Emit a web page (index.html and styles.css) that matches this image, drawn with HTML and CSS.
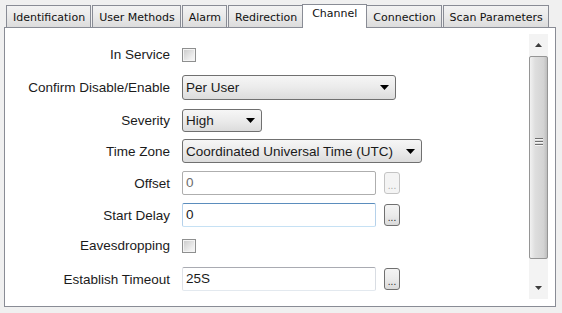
FILE: index.html
```html
<!DOCTYPE html>
<html lang="en">
<head>
  <meta charset="UTF-8" />
  <title>Channel</title>
  <link rel="stylesheet" href="styles.css">
</head>
<body>
  <div class="window">
    <div class="tabs">
      <div class="tab">Identification</div>
      <div class="tab">User Methods</div>
      <div class="tab">Alarm</div>
      <div class="tab">Redirection</div>
      <div class="tab active">Channel</div>
      <div class="tab">Connection</div>
      <div class="tab">Scan Parameters</div>
    </div>
    <div class="panel">
      <div class="form">
        <div class="label">In Service</div>
        <div class="field"><span class="check"></span></div>

        <div class="label">Confirm Disable/Enable</div>
        <div class="field">
          <div class="select confirm"><span>Per User</span><svg width="9" height="5"><polygon points="0,0 9,0 4.5,5" fill="#000"/></svg></div>
        </div>

        <div class="label">Severity</div>
        <div class="field">
          <div class="select severity"><span>High</span><svg width="9" height="5"><polygon points="0,0 9,0 4.5,5" fill="#000"/></svg></div>
        </div>

        <div class="label">Time Zone</div>
        <div class="field">
          <div class="select zone"><span>Coordinated Universal Time (UTC)</span><svg width="9" height="5"><polygon points="0,0 9,0 4.5,5" fill="#000"/></svg></div>
        </div>

        <div class="label">Offset</div>
        <div class="field">
          <div class="input disabled">0</div>
          <div class="dots disabled">...</div>
        </div>

        <div class="label">Start Delay</div>
        <div class="field">
          <div class="input focus">0</div>
          <div class="dots">...</div>
        </div>

        <div class="label">Eavesdropping</div>
        <div class="field"><span class="check"></span></div>

        <div class="label">Establish Timeout</div>
        <div class="field">
          <div class="input">25S</div>
          <div class="dots">...</div>
        </div>
      </div>
      <div class="scrollbar">
        <div class="sb-up"><svg width="7" height="4"><polygon points="0,4 7,4 3.5,0" fill="#3c3c3c"/></svg></div>
        <div class="sb-thumb"><span class="grip"></span></div>
        <div class="sb-down"><svg width="7" height="4"><polygon points="0,0 7,0 3.5,4" fill="#3c3c3c"/></svg></div>
      </div>
    </div>
  </div>
</body>
</html>
```

FILE: styles.css
```css
body {
  margin: 0;
  background: #f0f0f0;
  font-family: "Liberation Sans", Arial, sans-serif;
  font-size: 13.5px;
  color: #1b1b1b;
}
.window {
  width: 562px;
  height: 313px;
  padding: 4px 0 0 4px;
  box-sizing: border-box;
}
.tabs {
  display: flex;
  align-items: flex-end;
  height: 23px;
  padding-left: 2px;
}
.tab {
  height: 20px;
  line-height: 21px;
  padding: 1px 5px 0 6px;
  margin-right: 1px;
  border: 1px solid #898c95;
  border-bottom: none;
  background: linear-gradient(#f3f3f3, #e9e9e9 50%, #dcdcdc);
  font-family: "DejaVu Sans", Verdana, sans-serif;
  font-size: 11px;
  color: #111;
  white-space: nowrap;
}
.tab.active {
  position: relative;
  z-index: 1;
  height: 23px;
  line-height: 17px;
  padding: 0 9px;
  margin: 0 -1px -1px -2px;
  background: #fff;
}
.panel {
  width: 552px;
  height: 280px;
  box-sizing: border-box;
  display: flex;
  padding: 6px 7px 7px 0;
  border: 1px solid #898c95;
  background: #fff;
}
.form {
  flex: 1;
  display: grid;
  grid-template-columns: 165px 1fr;
  grid-template-rows: 31px 35px 30px 32px 32px 32px 29px 38px;
  column-gap: 12px;
  align-items: center;
  align-content: start;
  padding-top: 5px;
}
.label {
  text-align: right;
  white-space: nowrap;
}
.field {
  display: flex;
  align-items: center;
}
.check {
  width: 14px;
  height: 14px;
  box-sizing: border-box;
  border: 1px solid #8e8f8f;
  box-shadow: inset 0 0 0 1px #f4f4f4;
  background: linear-gradient(135deg, #c9c9c9, #eeeeee 70%, #f8f8f8);
}
.select {
  display: flex;
  align-items: center;
  justify-content: space-between;
  box-sizing: border-box;
  padding: 0 6px 0 3px;
  border: 1px solid #707070;
  border-radius: 3px;
  background: linear-gradient(#f6f6f6, #ebebeb 50%, #dcdcdc);
  color: #1a1a1a;
}
.select.confirm {
  width: 214px;
  height: 25px;
}
.select.severity {
  width: 80px;
  height: 23px;
}
.select.zone {
  width: 240px;
  height: 24px;
}
.input {
  width: 194px;
  height: 24px;
  box-sizing: border-box;
  padding-left: 3px;
  line-height: 21px;
  border: 1px solid;
  border-color: #a9abb2 #d9dde3 #e3e9ef #dfe2e8;
  border-radius: 2px;
  background: #fff;
}
.input.disabled {
  border-color: #aeaeae;
  color: #6d6d6d;
}
.input.focus {
  border-color: #5b8dbd #b5d1ea #c6e1f4 #b5d1ea;
}
.dots {
  width: 16px;
  height: 22px;
  box-sizing: border-box;
  margin-left: 8px;
  border: 1px solid #707070;
  border-radius: 3px;
  background: linear-gradient(#f4f4f4, #ebebeb 50%, #dadada);
  font-size: 10px;
  line-height: 26px;
  text-align: center;
  color: #2a2a2a;
  overflow: hidden;
}
.dots.disabled {
  border-color: #c4c4c4;
  background: #f4f4f4;
  color: #a8a8a8;
}
.scrollbar {
  width: 19px;
  display: flex;
  flex-direction: column;
  background: #efefef;
}
.sb-up {
  height: 22px;
  display: flex;
  justify-content: center;
  padding-top: 9px;
  box-sizing: border-box;
  background: #f3f3f3;
}
.sb-thumb {
  height: 203px;
  box-sizing: border-box;
  display: flex;
  justify-content: center;
  padding-top: 81px;
  border: 1px solid #959595;
  border-radius: 2px;
  background: linear-gradient(to right, #f1f1f1, #dedede 30%, #d3d3d3 80%, #bebebe);
}
.grip {
  width: 8px;
  height: 8px;
  background: repeating-linear-gradient(#6f6f6f 0 1px, #f4f4f4 1px 2px, transparent 2px 3px);
}
.sb-down {
  flex: 1;
  display: flex;
  justify-content: center;
  align-items: flex-end;
  padding-bottom: 9px;
  box-sizing: border-box;
  background: #f3f3f3;
}
```
